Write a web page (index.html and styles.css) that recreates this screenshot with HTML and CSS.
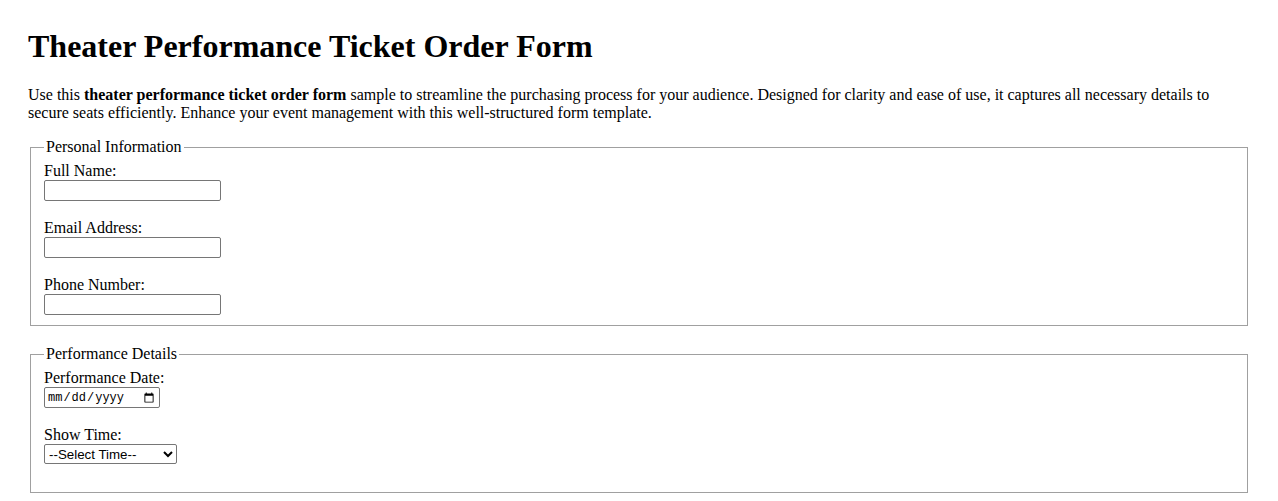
FILE: index.html
```html
<!DOCTYPE html>
<html lang="en">
<head>
<meta charset="utf-8">
<title>Theater Performance Ticket Order Form</title>
<link rel="stylesheet" href="styles.css">
</head>
<body>
<h1 class="title">Theater Performance Ticket Order Form</h1>
<p class="intro">Use this <strong>theater performance ticket order form</strong> sample to streamline the purchasing process for your audience. Designed for clarity and ease of use, it captures all necessary details to secure seats efficiently. Enhance your event management with this well-structured form template.</p>
<form class="order-form">
  <fieldset class="group">
    <legend class="group-title">Personal Information</legend>
    <div class="field">
      <label for="name">Full Name:</label>
      <input class="text-input" type="text" id="name">
    </div>
    <div class="field">
      <label for="email">Email Address:</label>
      <input class="text-input" type="email" id="email">
    </div>
    <div class="field">
      <label for="phone">Phone Number:</label>
      <input class="text-input" type="tel" id="phone">
    </div>
  </fieldset>
  <fieldset class="group group-spaced">
    <legend class="group-title">Performance Details</legend>
    <div class="field">
      <label for="date">Performance Date:</label>
      <input class="date-input" type="date" id="date">
    </div>
    <div class="field">
      <label for="time">Show Time:</label>
      <select class="select-input" id="time">
        <option>--Select Time--</option>
        <option>2:00 PM</option>
        <option>7:30 PM</option>
      </select>
    </div>
  </fieldset>
</form>
</body>
</html>
```
FILE: styles.css
```css
html, body {
  background: #ffffff;
}
body {
  margin: 28px;
  font-family: "Liberation Serif", "Times New Roman", serif;
  font-size: 16px;
  color: #000;
}
.title {
  font-size: 32px;
  font-weight: bold;
  margin: 0 0 21px 0;
  line-height: 37px;
}
.intro {
  margin: 0 0 17px 0;
  line-height: 17.5px;
}
.order-form {
  display: flex;
  flex-direction: column;
  gap: 19px;
}
.group {
  margin: 0 2px;
  padding: 6px 12px 10px 13px;
  border: 1px solid #a0a0a0;
  display: flex;
  flex-direction: column;
  gap: 18px;
}
.group-spaced {
  padding-bottom: 28px;
}
.group-title {
  padding: 0 2px;
  font-size: 16px;
  line-height: 18px;
}
.field {
  display: flex;
  flex-direction: column;
  align-items: flex-start;
}
.field label {
  line-height: 18px;
}
.text-input {
  width: 177px;
  height: 21px;
  box-sizing: border-box;
  border: 1px solid #767676;
  border-radius: 2px;
  font-family: "Liberation Sans", Arial, sans-serif;
  font-size: 13.33px;
  padding: 1px 2px;
}
.date-input {
  width: 116px;
  height: 21px;
  box-sizing: border-box;
  border: 1px solid #767676;
  border-radius: 2px;
  font-family: "Liberation Mono", monospace;
  font-size: 12px;
  padding: 1px 2px;
}
.select-input {
  width: 133px;
  height: 20px;
  box-sizing: border-box;
  border: 1px solid #767676;
  border-radius: 2px;
  font-family: "Liberation Sans", Arial, sans-serif;
  font-size: 13.33px;
  background: #fff;
}
```
